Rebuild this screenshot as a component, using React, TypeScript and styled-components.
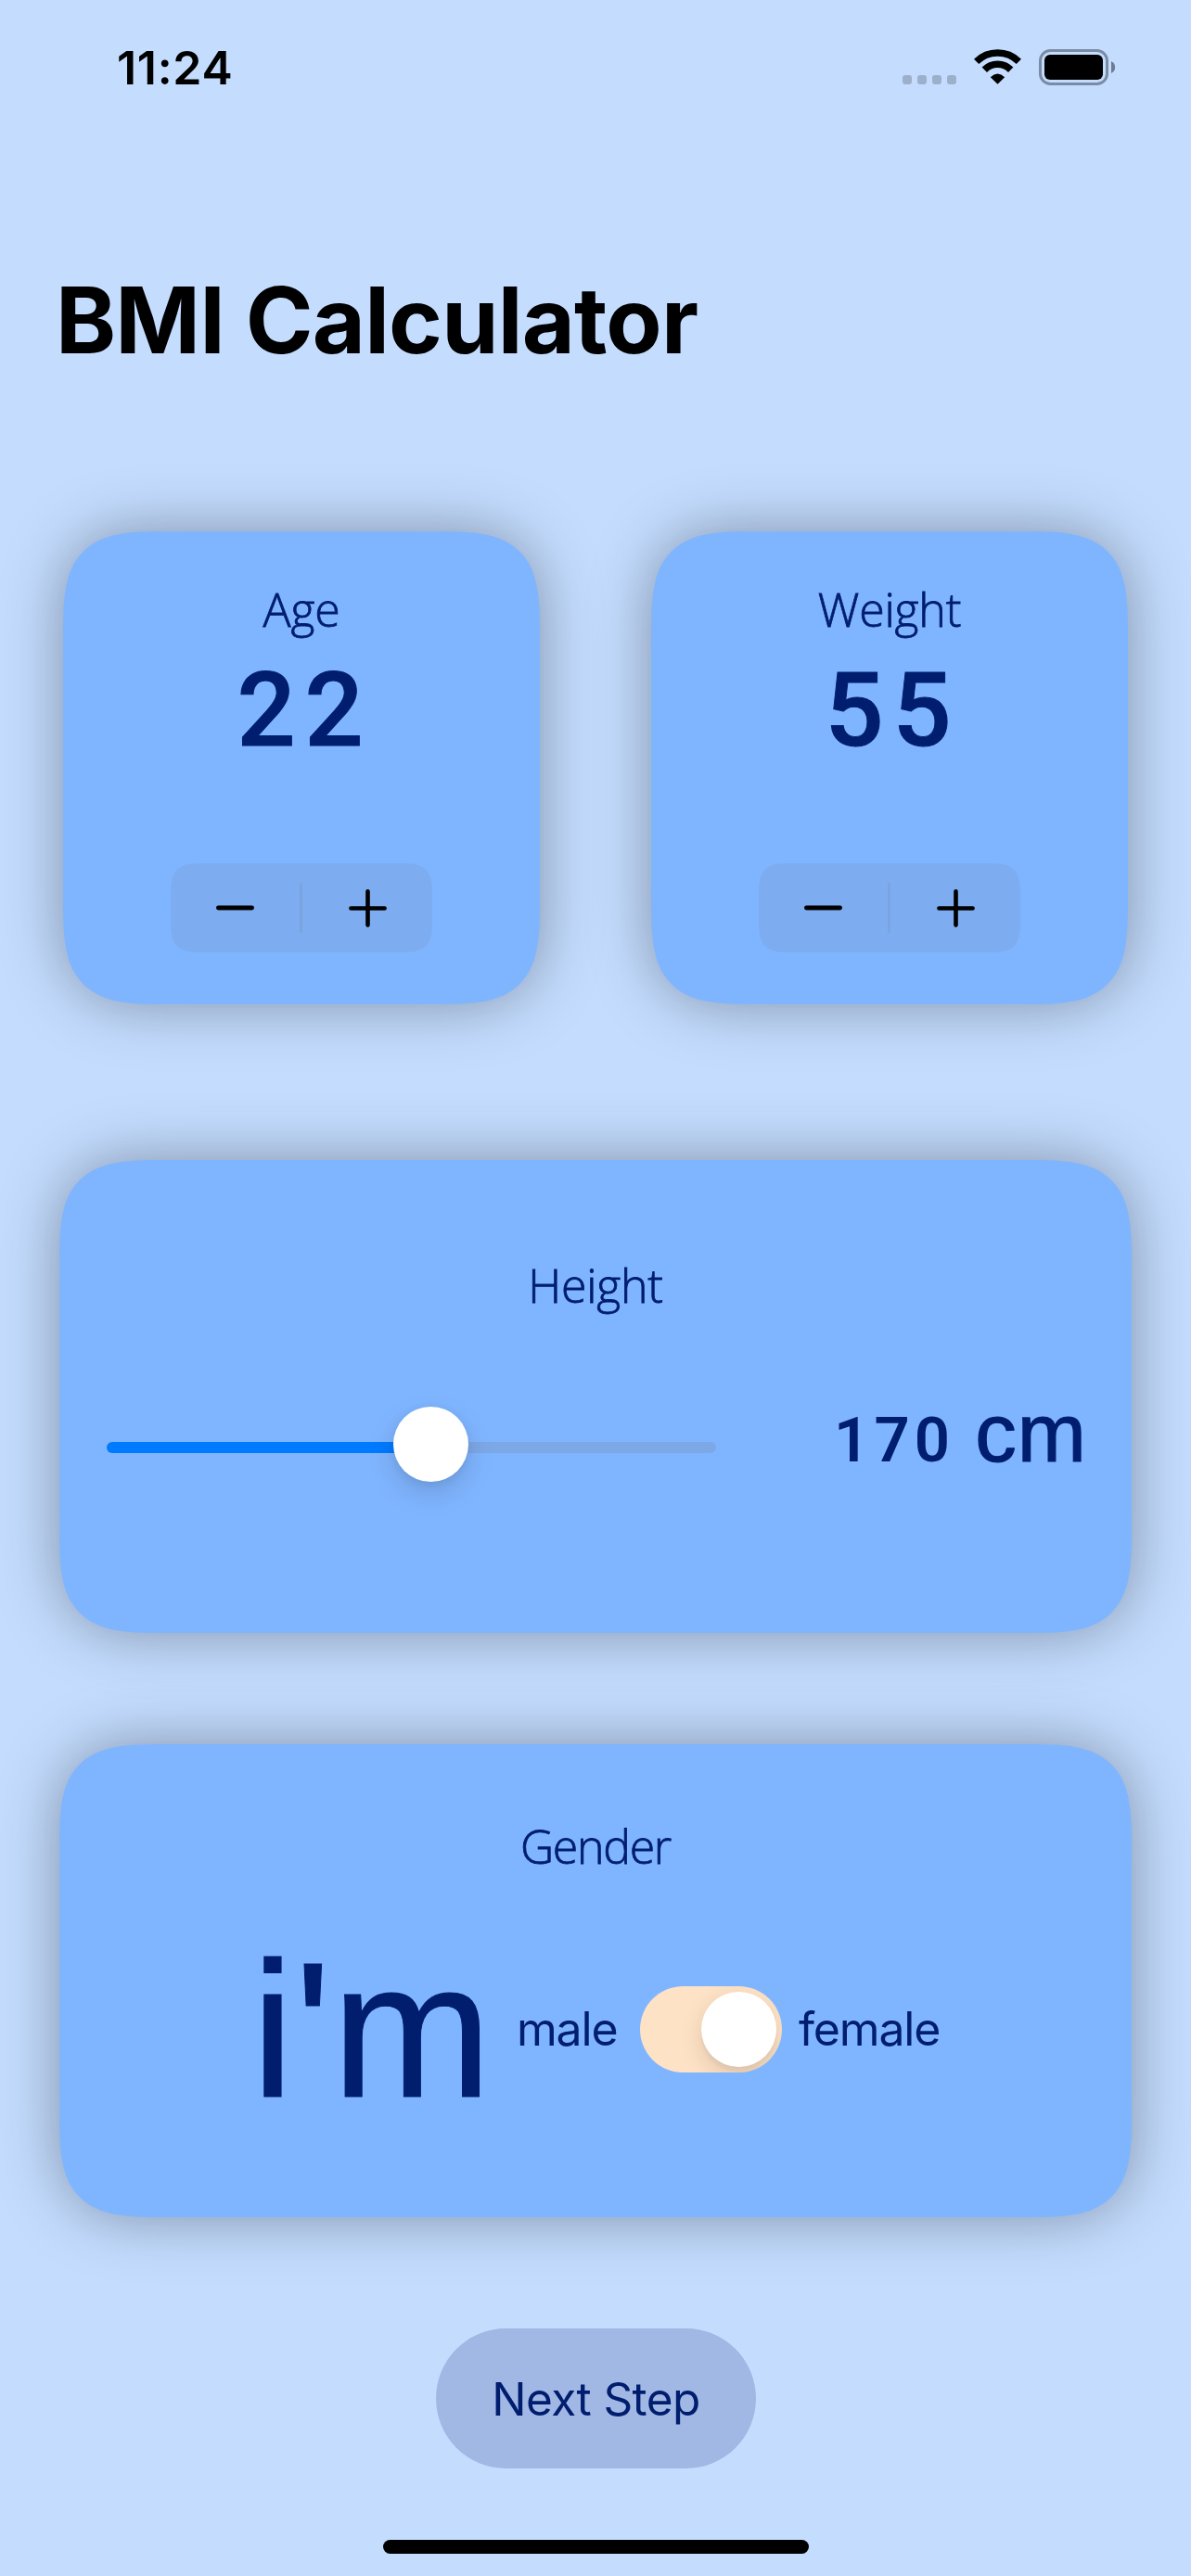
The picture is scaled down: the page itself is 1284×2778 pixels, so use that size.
import React, { useState } from "react";
import styled, { createGlobalStyle } from "styled-components";

const NAVY = "#001d6e";
const SKY = "#c4ddff";

const GlobalStyle = createGlobalStyle`
  *, *::before, *::after { box-sizing: border-box; }
  body { margin: 0; background: ${SKY}; }
  button { border: 0; margin: 0; padding: 0; background: none; font: inherit; color: inherit; }
`;

const Screen = styled.div`
  width: 1284px;
  height: 2778px;
  display: flex;
  flex-direction: column;
  overflow: hidden;
  background: ${SKY};
  color: ${NAVY};
  font-family: Inter, "Liberation Sans", sans-serif;
`;

const StatusBar = styled.header`
  height: 144px;
  padding: 42px 82px 0 126px;
  display: flex;
  justify-content: space-between;
  align-items: flex-start;
  color: #000;
`;

const Clock = styled.time`
  font-size: 50px;
  font-weight: 600;
  line-height: 62px;
  letter-spacing: 0.7px;
`;

const StatusIcons = styled.div`
  display: flex;
  align-items: flex-start;
  padding-top: 11px;
`;

const SignalDots = styled.div`
  display: flex;
  gap: 6px;
  padding-top: 28px;
  margin-right: 19px;
`;

const SignalDot = styled.span`
  width: 10px;
  height: 10px;
  border-radius: 3px;
  background: rgba(0, 0, 0, 0.2);
`;

const Title = styled.h1`
  margin: 0;
  height: 429px;
  padding: 142px 0 0 60px;
  color: #000;
  font-size: 98.5px;
  font-weight: 700;
  line-height: 120px;
  letter-spacing: -0.8px;
  white-space: nowrap;
`;

const CardRow = styled.div`
  display: flex;
  justify-content: space-between;
  padding: 0 68px;
`;

const Card = styled.section<{ $width: number; $top: number }>`
  width: ${(p) => p.$width}px;
  height: 510px;
  flex: none;
  align-self: center;
  display: flex;
  flex-direction: column;
  align-items: center;
  padding-top: ${(p) => p.$top}px;
  background: #7fb5ff;
  border-radius: 115px;
  corner-shape: superellipse(1.72);
  box-shadow: 0 0 66px rgba(0, 0, 0, 0.35);
`;

const Stack = styled.div<{ $gap: number }>`
  width: 100%;
  display: flex;
  flex-direction: column;
  align-items: center;
  margin-top: ${(p) => p.$gap}px;
`;

const Label = styled.h2<{ $tracking?: number }>`
  margin: 0;
  font-family: "Open Sans", "Noto Sans", sans-serif;
  font-size: 50px;
  font-weight: 300;
  line-height: 72px;
  letter-spacing: ${(p) => p.$tracking ?? -0.2}px;
  -webkit-text-stroke: 0.8px currentColor;
`;

const Value = styled.output`
  margin-top: 8px;
  padding-left: 7px;
  font-family: Roboto, sans-serif;
  font-size: 111px;
  font-weight: 500;
  line-height: 130px;
  letter-spacing: 10px;
  -webkit-text-stroke: 1px currentColor;
`;

const StepperBox = styled.div`
  width: 282px;
  height: 96px;
  display: grid;
  grid-template-columns: 1fr 3px 1fr;
  align-items: center;
  margin-top: 100px;
  border-radius: 36px;
  corner-shape: superellipse(1.72);
  background: rgba(118, 118, 128, 0.12);
`;

const StepperButton = styled.button`
  height: 96px;
  display: flex;
  align-items: center;
  justify-content: center;
`;

const StepperDivider = styled.span`
  height: 54px;
  margin: 0 1px 0 -1px;
  border-radius: 2px;
  background: #7ba4de;
`;

const HeightRow = styled.div`
  width: 100%;
  height: 110px;
  display: flex;
  align-items: center;
  justify-content: space-between;
  padding: 0 48px 0 51px;
`;

const Track = styled.div`
  width: 657px;
  height: 12px;
  margin-top: 6px;
  display: flex;
  align-items: center;
  border-radius: 6px;
  background: rgba(120, 120, 128, 0.2);
`;

const TrackFill = styled.div`
  height: 12px;
  flex: none;
  border-radius: 6px 0 0 6px;
  background: #007aff;
`;

const Thumb = styled.div`
  width: 81px;
  height: 81px;
  flex: none;
  margin: -7px 0 0 -4px;
  border-radius: 50%;
  background: #fff;
  box-shadow: 0 12px 30px rgba(0, 0, 0, 0.14), 0 2px 10px rgba(0, 0, 0, 0.06);
`;

const Reading = styled.div`
  display: flex;
  align-items: baseline;
  margin-bottom: 26px;
  white-space: nowrap;
`;

const ReadingNumber = styled.output`
  font-family: Roboto, sans-serif;
  font-size: 67px;
  font-weight: 600;
  line-height: 80px;
  letter-spacing: 5.2px;
`;

const ReadingUnit = styled.span`
  margin-left: 22px;
  font-family: "Liberation Sans", sans-serif;
  font-size: 89px;
  line-height: 100px;
  letter-spacing: 1px;
  -webkit-text-stroke: 1.2px currentColor;
`;

const GenderRow = styled.div`
  width: 100%;
  height: 237px;
  display: flex;
  align-items: center;
  padding-left: 207px;
`;

const Intro = styled.span`
  width: 286px;
  padding-top: 2px;
  font-family: "Liberation Sans", sans-serif;
  font-size: 207px;
  line-height: 230px;
  letter-spacing: 0.6px;
  -webkit-text-stroke: 1px currentColor;
  white-space: nowrap;
`;

const Choice = styled.span<{ $width: number }>`
  width: ${(p) => p.$width}px;
  margin-top: -2px;
  font-size: 50px;
  line-height: 62px;
  letter-spacing: -1.2px;
  white-space: nowrap;
`;

const Switch = styled.button<{ $on: boolean }>`
  width: 153px;
  height: 93px;
  flex: none;
  display: flex;
  align-items: center;
  justify-content: ${(p) => (p.$on ? "flex-end" : "flex-start")};
  padding: 0 6px;
  margin-right: 18px;
  border-radius: 47px;
  background: #fee2c5;
  overflow: hidden;
`;

const Knob = styled.span`
  width: 81px;
  height: 81px;
  border-radius: 50%;
  background: #fff;
  box-shadow: 0 9px 24px rgba(0, 0, 0, 0.13), 0 6px 3px rgba(0, 0, 0, 0.03);
`;

const NextButton = styled.button`
  width: 345px;
  height: 151px;
  margin: 120px 0 0 470px;
  padding-top: 1px;
  border-radius: 76px;
  background: #a1b8e5;
  color: ${NAVY};
  font-size: 49.5px;
  line-height: 62px;
  letter-spacing: -0.6px;
`;

const HomeIndicator = styled.div`
  width: 459px;
  height: 15px;
  margin: 77px 0 0 413px;
  border-radius: 8px;
  background: #000;
`;

const Wifi = () => (
  <svg width="51" height="38" viewBox="0 0 51 38" fill="none">
    <path d="M2.6 13.4 A32.5 32.5 0 0 1 48.4 13.4" stroke="#000" strokeWidth="7.6" />
    <path d="M11.3 22.2 A20 20 0 0 1 39.7 22.2" stroke="#000" strokeWidth="7.6" />
    <path d="M17.8 30.2 Q25.5 22.8 33.2 30.2 L25.5 37.8 Z" fill="#000" />
  </svg>
);

const BatterySvg = styled.svg`
  margin-left: 19px;
  margin-right: -1px;
`;

const Battery = () => (
  <BatterySvg width="83" height="39" viewBox="0 0 83 39">
    <rect x="1.5" y="1.5" width="72" height="36" rx="11" fill="none" stroke="#7b8ba3" strokeWidth="3" />
    <rect x="6" y="6" width="63" height="27" rx="6" fill="#000" />
    <path d="M78 13 A7.2 7.2 0 0 1 78 26 Z" fill="#6e7b90" />
  </BatterySvg>
);

const Minus = () => (
  <svg width="41" height="41" viewBox="0 0 41 41">
    <path d="M2.4 20 H38.6" stroke="#000" strokeWidth="4.8" strokeLinecap="round" />
  </svg>
);

const Plus = () => (
  <svg width="41" height="41" viewBox="0 0 41 41">
    <path d="M2.4 20.5 H38.6 M20.5 2.4 V38.6" stroke="#000" strokeWidth="4.6" strokeLinecap="round" />
  </svg>
);

const CounterCard = ({ label, initial }: { label: string; initial: number }) => {
  const [value, setValue] = useState(initial);
  return (
    <Card $width={514} $top={48}>
      <Label>{label}</Label>
      <Value>{value}</Value>
      <StepperBox>
        <StepperButton aria-label="decrease" onClick={() => setValue(value - 1)}><Minus /></StepperButton>
        <StepperDivider />
        <StepperButton aria-label="increase" onClick={() => setValue(value + 1)}><Plus /></StepperButton>
      </StepperBox>
    </Card>
  );
};

export default function App() {
  const [female, setFemale] = useState(true);
  const height = 170;
  const fill = Math.round(((height - 100) / 147) * 657);

  return (
    <>
      <GlobalStyle />
      <Screen>
        <StatusBar>
          <Clock>11:24</Clock>
          <StatusIcons>
            <SignalDots>{[0, 1, 2, 3].map((i) => <SignalDot key={i} />)}</SignalDots>
            <Wifi />
            <Battery />
          </StatusIcons>
        </StatusBar>

        <Title>BMI Calculator</Title>

        <CardRow>
          <CounterCard label="Age" initial={22} />
          <CounterCard label="Weight" initial={55} />
        </CardRow>

        <Stack $gap={168}>
          <Card $width={1156} $top={99}>
            <Label>Height</Label>
            <Stack $gap={81}>
              <HeightRow>
                <Track>
                  <TrackFill style={{ width: fill }} />
                  <Thumb />
                </Track>
                <Reading>
                  <ReadingNumber>{height}</ReadingNumber>
                  <ReadingUnit>cm</ReadingUnit>
                </Reading>
              </HeightRow>
            </Stack>
          </Card>
        </Stack>

        <Stack $gap={120}>
          <Card $width={1156} $top={74}>
            <Label $tracking={-1.3}>Gender</Label>
            <Stack $gap={43}>
              <GenderRow>
                <Intro>i'm</Intro>
                <Choice $width={133}>male</Choice>
                <Switch $on={female} aria-label="gender" onClick={() => setFemale(!female)}><Knob /></Switch>
                <Choice $width={160}>female</Choice>
              </GenderRow>
            </Stack>
          </Card>
        </Stack>

        <NextButton>Next Step</NextButton>
        <HomeIndicator />
      </Screen>
    </>
  );
}
